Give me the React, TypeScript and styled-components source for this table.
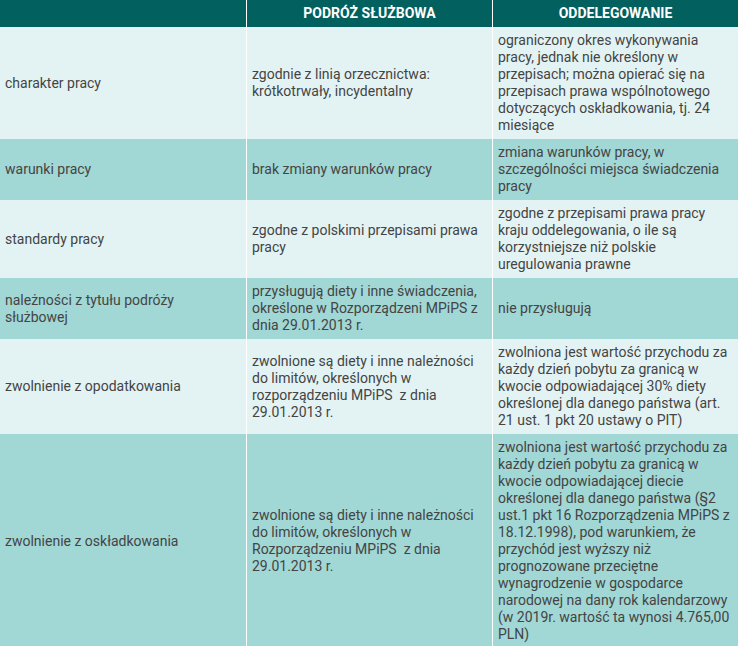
import React from "react";
import styled, { createGlobalStyle } from "styled-components";

const Global = createGlobalStyle`
  html, body { margin: 0; padding: 0; background: #ffffff; }
  body { font-family: Roboto, "Noto Sans", "Liberation Sans", sans-serif; }
`;

const Table = styled.div`
  display: grid;
  grid-template-columns: 246px 245px 245px;
  column-gap: 1px;
  width: 738px;
  background: #ffffff;
`;

const HeadCell = styled.div`
  background: #02605e;
  color: #ffffff;
  font-weight: 700;
  font-size: 14px;
  line-height: 17px;
  padding: 5px;
  text-align: center;
  text-transform: uppercase;
`;

const Cell = styled.div<{ $dark: boolean; $label: boolean }>`
  background: ${(p) => (p.$dark ? "#a1d7d4" : "#e3f3f3")};
  color: #444444;
  font-size: 14px;
  line-height: 17px;
  padding: 5px ${(p) => (p.$label ? "14px" : "5px")} 5px 5px;
  display: flex;
  align-items: center;
`;

const rows: [string, string, string][] = [
  [
    "charakter pracy",
    "zgodnie z linią orzecznictwa: krótkotrwały, incydentalny",
    "ograniczony okres wykonywania pracy, jednak nie określony w przepisach; można opierać się na przepisach prawa wspólnotowego dotyczących oskładkowania, tj. 24 miesiące",
  ],
  [
    "warunki pracy",
    "brak zmiany warunków pracy",
    "zmiana warunków pracy, w szczególności miejsca świadczenia pracy",
  ],
  [
    "standardy pracy",
    "zgodne z polskimi przepisami prawa pracy",
    "zgodne z przepisami prawa pracy kraju oddelegowania, o ile są korzystniejsze niż polskie uregulowania prawne",
  ],
  [
    "należności z tytułu podróży służbowej",
    "przysługują diety i inne świadczenia, określone w Rozporządzeni MPiPS z dnia 29.01.2013 r.",
    "nie przysługują",
  ],
  [
    "zwolnienie z opodatkowania",
    "zwolnione są diety i inne należności do limitów, określonych w rozporządzeniu MPiPS\u00a0 z dnia 29.01.2013 r.",
    "zwolniona jest wartość przychodu za każdy dzień pobytu za granicą w kwocie odpowiadającej 30% diety określonej dla danego państwa (art. 21 ust. 1 pkt 20 ustawy o PIT)",
  ],
  [
    "zwolnienie z oskładkowania",
    "zwolnione są diety i inne należności do limitów, określonych w Rozporządzeniu MPiPS\u00a0 z dnia 29.01.2013 r.",
    "zwolniona jest wartość przychodu za każdy dzień pobytu za granicą w kwocie odpowiadającej diecie określonej dla danego państwa (§2 ust.1 pkt 16 Rozporządzenia MPiPS z 18.12.1998), pod warunkiem, że przychód jest wyższy niż prognozowane przeciętne wynagrodzenie w gospodarce narodowej na dany rok kalendarzowy (w 2019r. wartość ta wynosi 4.765,00 PLN)",
  ],
];

export default function App() {
  return (
    <>
      <Global />
      <Table>
        <HeadCell />
        <HeadCell>Podróż służbowa</HeadCell>
        <HeadCell>Oddelegowanie</HeadCell>
        {rows.map((r, i) =>
          r.map((t, j) => (
            <Cell key={`${i}-${j}`} $dark={i % 2 === 1} $label={j === 0}>
              {t}
            </Cell>
          ))
        )}
      </Table>
    </>
  );
}
